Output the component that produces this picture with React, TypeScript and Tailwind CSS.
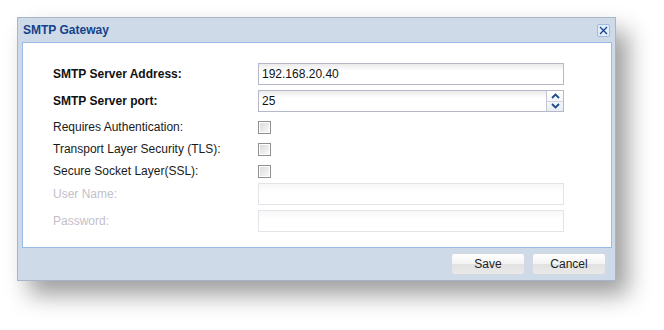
import React from 'react'

const font = { fontFamily: '"Liberation Sans", Arial, sans-serif' }

function TextField({ value, disabled }: { value?: string; disabled?: boolean }) {
  return (
    <div
      className={`w-[306px] h-[22px] border flex items-center px-[3px] text-[12px] text-[#111] ${
        disabled
          ? 'border-[#e3e3ea] bg-[linear-gradient(to_bottom,#f7f7f7,#ffffff_8px)]'
          : 'border-[#b5b8c8] bg-[linear-gradient(to_bottom,#eaeaea,#ffffff_7px)]'
      }`}
    >
      {value}
    </div>
  )
}

function SpinnerField({ value }: { value: string }) {
  return (
    <div className="w-[306px] h-[22px] border border-[#b5b8c8] flex text-[12px] text-[#111]">
      <div className="flex-1 flex items-center px-[3px] bg-[linear-gradient(to_bottom,#eaeaea,#ffffff_7px)]">
        {value}
      </div>
      <div className="w-[17px] flex flex-col border-l border-[#c5c8d4] bg-[linear-gradient(to_bottom,#ffffff,#e9edf3)]">
        <div className="flex-1 flex items-center justify-center border-b border-[#d3d7de]">
          <svg width="9" height="6" viewBox="0 0 9 6">
            <path d="M1 5 L4.5 1.5 L8 5" fill="none" stroke="#1c4d8a" strokeWidth="1.8" />
          </svg>
        </div>
        <div className="flex-1 flex items-center justify-center">
          <svg width="9" height="6" viewBox="0 0 9 6">
            <path d="M1 1 L4.5 4.5 L8 1" fill="none" stroke="#1c4d8a" strokeWidth="1.8" />
          </svg>
        </div>
      </div>
    </div>
  )
}

function Checkbox() {
  return (
    <div className="w-[13px] h-[13px] border border-[#8f8f8f] bg-white p-[1px]">
      <div className="w-full h-full bg-[linear-gradient(135deg,#dcdcdc,#f8f8f8)]" />
    </div>
  )
}

function Row({
  label,
  bold,
  disabled,
  className,
  children,
}: {
  label: string
  bold?: boolean
  disabled?: boolean
  className?: string
  children: React.ReactNode
}) {
  return (
    <div className={`flex items-center h-[22px] ${className ?? ''}`}>
      <div
        className={`w-[205px] text-[12px] ${bold ? 'font-bold text-[#111]' : ''} ${
          disabled ? 'text-[#c3bfca]' : 'text-[#1a1a1a]'
        }`}
      >
        {label}
      </div>
      {children}
    </div>
  )
}

function Button({ children }: { children: React.ReactNode }) {
  return (
    <button className="w-[74px] h-[22px] rounded-[3px] border border-[#d4d9e0] text-[12px] text-[#222] bg-[linear-gradient(to_bottom,#ffffff,#f3f3f3_50%,#e2e2e2_50%,#e9e9e9)]">
      {children}
    </button>
  )
}

export default function App() {
  return (
    <div className="w-[664px] h-[330px] bg-white pt-[17px] pl-[17px]" style={font}>
      <div className="w-[599px] h-[264px] border border-[#a7b5c9] bg-[#cedae7] flex flex-col shadow-[12px_14px_22px_rgba(0,0,0,0.38)]">
        {/* Title bar */}
        <div className="h-[24px] flex items-center justify-between pl-[5px] pr-[5px]">
          <span className="text-[12px] font-bold text-[#15428b]">SMTP Gateway</span>
          <div className="w-[13px] h-[13px] border border-[#99bbe8] rounded-[2px] bg-[#e4ecf7] flex items-center justify-center">
            <svg width="9" height="9" viewBox="0 0 9 9">
              <path d="M1 1 L8 8 M8 1 L1 8" stroke="#15428b" strokeWidth="1.3" />
            </svg>
          </div>
        </div>

        {/* Body */}
        <div className="ml-[4px] mr-[3px] h-[206px] border border-[#99bbe8] bg-white pl-[30px] pt-[20px]">
          <Row label="SMTP Server Address:" bold>
            <TextField value="192.168.20.40" />
          </Row>
          <Row label="SMTP Server port:" bold className="mt-[5px]">
            <SpinnerField value="25" />
          </Row>
          <Row label="Requires Authentication:" className="mt-[4px]">
            <Checkbox />
          </Row>
          <Row label="Transport Layer Security (TLS):">
            <Checkbox />
          </Row>
          <Row label="Secure Socket Layer(SSL):">
            <Checkbox />
          </Row>
          <Row label="User Name:" disabled className="mt-[1px]">
            <TextField disabled />
          </Row>
          <Row label="Password:" disabled className="mt-[5px]">
            <TextField disabled />
          </Row>
        </div>

        {/* Footer */}
        <div className="h-[32px] flex items-center justify-end gap-[7px] pr-[9px]">
          <Button>Save</Button>
          <Button>Cancel</Button>
        </div>
      </div>
    </div>
  )
}
